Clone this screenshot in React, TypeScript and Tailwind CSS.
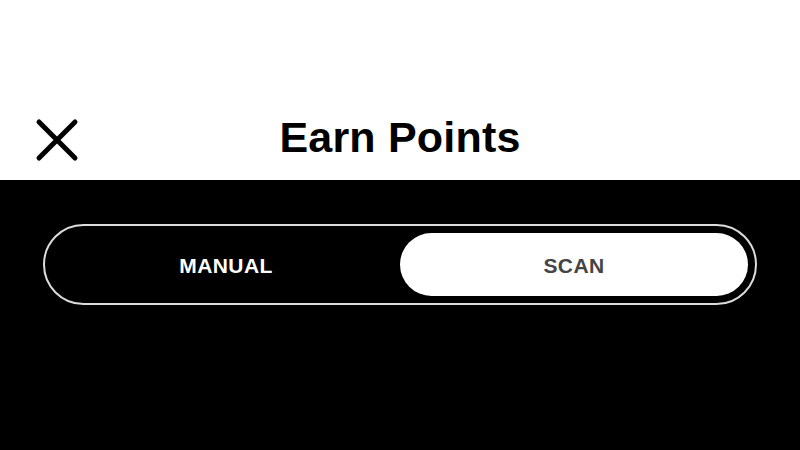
import React, { useState } from 'react';

export default function App() {
  const [mode, setMode] = useState<'manual' | 'scan'>('scan');

  return (
    <div className="w-[800px] h-[450px] flex flex-col bg-black overflow-hidden" style={{ fontFamily: '"Liberation Sans", Arial, sans-serif' }}>
      <header className="h-[180px] bg-white relative flex items-end justify-center pb-[18px] shrink-0">
        <button className="absolute left-[35px] top-[118px] w-[44px] h-[44px]" aria-label="Close">
          <svg viewBox="0 0 44 44" className="w-full h-full" fill="none" stroke="#000" strokeWidth="5" strokeLinecap="round">
            <path d="M4 4 L40 40 M40 4 L4 40" />
          </svg>
        </button>
        <h1 className="text-[43px] leading-[50px] font-bold text-black tracking-[0.2px]">Earn Points</h1>
      </header>

      <div className="pt-[44px] px-[43px]">
        <div className="h-[81px] w-[714px] rounded-full border-2 border-[#dcdcdc] p-[7px] flex">
          <button
            onClick={() => setMode('manual')}
            className={`flex-1 rounded-full text-[21px] tracking-[0.4px] font-bold pt-[2px] ${mode === 'manual' ? 'bg-white text-[#444]' : 'text-white'}`}
          >
            MANUAL
          </button>
          <button
            onClick={() => setMode('scan')}
            className={`flex-1 rounded-full text-[21px] tracking-[0.4px] font-bold pt-[2px] ${mode === 'scan' ? 'bg-white text-[#444]' : 'text-white'}`}
          >
            SCAN
          </button>
        </div>
      </div>
    </div>
  );
}
